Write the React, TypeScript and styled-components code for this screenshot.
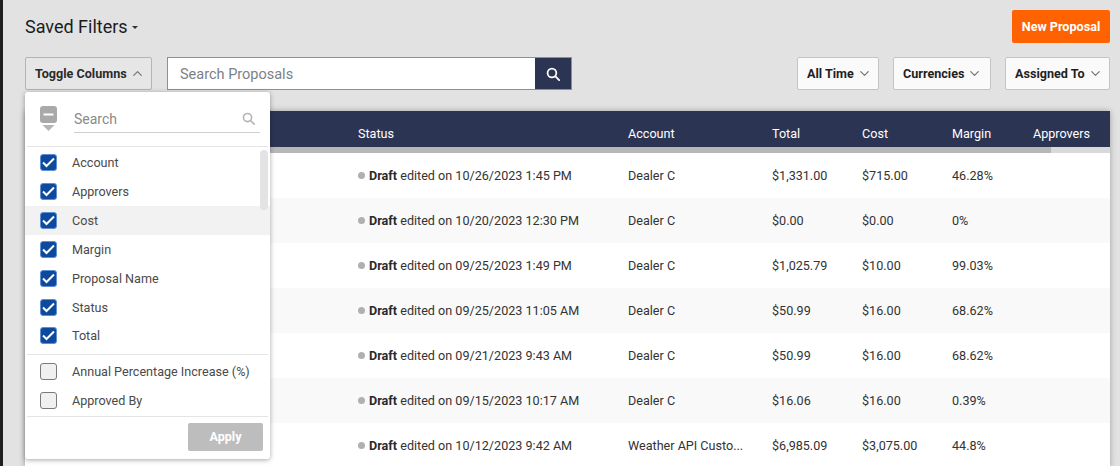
import React from 'react'
import styled, { createGlobalStyle } from 'styled-components'
import { ChevronDown, ChevronUp } from 'lucide-react'

const GlobalStyle = createGlobalStyle`
  html, body {
    margin: 0;
    padding: 0;
    height: 466px;
    overflow: hidden;
    background: #e2e2e2;
    font-family: Roboto, "Liberation Sans", sans-serif;
  }
`

const Page = styled.div`
  width: 1120px;
  height: 466px;
  box-sizing: border-box;
  overflow: hidden;
  border-left: 3px solid #1f1f1f;
  padding: 10px 10px 0 22px;
`

const TopBar = styled.div`
  display: flex;
  justify-content: space-between;
  align-items: center;
  height: 33px;
`

const SavedFilters = styled.div`
  display: flex;
  align-items: center;
  gap: 4px;
  font-size: 18px;
  color: #1c1c1c;
  margin-top: -1px;
`

const Caret = styled.span`
  width: 0;
  height: 0;
  margin-top: 2px;
  border-left: 3px solid transparent;
  border-right: 3px solid transparent;
  border-top: 3px solid #333;
`

const NewProposal = styled.button`
  width: 98px;
  height: 33px;
  border: 0;
  border-radius: 2px;
  padding: 0;
  background: #ff6200;
  color: #fff;
  font: 700 12.6px Roboto, sans-serif;
`

const Toolbar = styled.div`
  position: relative;
  display: flex;
  align-items: center;
  height: 33px;
  margin-top: 14px;
`

const ToggleButton = styled.button`
  display: flex;
  align-items: center;
  gap: 3px;
  width: 127px;
  height: 33px;
  box-sizing: border-box;
  border: 1px solid #b4b4b4;
  border-radius: 2px;
  padding: 0 0 0 9px;
  background: #e6e6e6;
  color: #2a2a2a;
  font: 700 12.6px Roboto, sans-serif;
`

const SearchBox = styled.div`
  display: flex;
  width: 405px;
  height: 33px;
  box-sizing: border-box;
  margin-left: 15px;
  border: 1px solid #8f8f8f;
  background: #fff;
`

const SearchInput = styled.div`
  flex: 1;
  padding: 1px 0 0 12px;
  font-size: 14.5px;
  line-height: 31px;
  color: #7b8189;
`

const SearchButton = styled.div`
  display: flex;
  align-items: center;
  justify-content: center;
  width: 36px;
  background: #2c3454;
`

const Filters = styled.div`
  display: flex;
  gap: 14px;
  margin-left: auto;
`

const FilterButton = styled.button<{ $width: number }>`
  display: flex;
  align-items: center;
  gap: 3px;
  width: ${(p) => p.$width}px;
  height: 33px;
  box-sizing: border-box;
  border: 1px solid #c4c4c4;
  border-radius: 2px;
  padding: 0 0 0 9px;
  background: #fafafa;
  color: #1f1f1f;
  font: 700 12.6px Roboto, sans-serif;
`

const Table = styled.div`
  margin-top: 21px;
  background: #fff;
  box-shadow: 0 0 6px rgba(0, 0, 0, 0.3);
`

const Columns = styled.div`
  display: grid;
  grid-template-columns: 333px 270px 144px 90px 90px 81px 77px;
  align-items: center;
`

const HeadRow = styled(Columns)`
  height: 36px;
  box-sizing: border-box;
  padding-top: 9px;
  background: #2c3454;
  color: #fff;
  font-size: 12.6px;
`

const ScrollTrack = styled.div`
  height: 6px;
  background: #d9d9d9;
`

const ScrollThumb = styled.div`
  width: 1026px;
  height: 6px;
  background: #b7b7b7;
`

const Row = styled(Columns)<{ $alt: boolean }>`
  height: 45px;
  background: ${(p) => (p.$alt ? '#f9f9f9' : '#fff')};
  color: #333;
  font-size: 12.6px;
`

const StatusCell = styled.div`
  display: flex;
  align-items: center;
  white-space: pre;
`

const Dot = styled.span`
  width: 7px;
  height: 7px;
  margin-right: 4px;
  border-radius: 50%;
  background: #b0b0b0;
`

const Bold = styled.b`
  font-weight: 700;
  color: #2a2a2a;
`

const Popover = styled.div`
  position: absolute;
  top: 35px;
  left: 0;
  z-index: 5;
  width: 245px;
  height: 367px;
  border-radius: 3px;
  background: #fff;
  box-shadow: 0 1px 5px rgba(0, 0, 0, 0.35);
`

const PopHead = styled.div`
  display: flex;
  align-items: flex-start;
  height: 55px;
  margin: 0 2px;
  padding: 14px 0 0 13px;
  box-sizing: border-box;
  border-bottom: 1px solid #e4e4e4;
`

const PopSearch = styled.div`
  display: flex;
  justify-content: space-between;
  align-items: center;
  width: 186px;
  height: 27px;
  margin-left: 17px;
  padding: 0 5px 1px 0;
  box-sizing: border-box;
  border-bottom: 1px solid #cfcfcf;
  color: #8a8a8a;
  font-size: 14px;
`

const ListArea = styled.div`
  position: relative;
  padding-top: 1.5px;
`

const ScrollBar = styled.div`
  position: absolute;
  top: 3px;
  right: 2px;
  width: 8px;
  height: 60px;
  border-radius: 4px;
  background: #e3e3e3;
`

const Option = styled.div<{ $hover?: boolean }>`
  display: flex;
  align-items: center;
  gap: 15px;
  height: 28.85px;
  padding-left: 15px;
  background: ${(p) => (p.$hover ? '#f2f2f2' : 'transparent')};
  color: #4a4a4a;
  font-size: 12.6px;
`

const Check = styled.span<{ $on: boolean }>`
  display: flex;
  align-items: center;
  justify-content: center;
  flex: none;
  width: 17px;
  height: 17px;
  box-sizing: border-box;
  border-radius: 3px;
  border: 1px solid ${(p) => (p.$on ? '#5f8fd0' : '#7a7a7a')};
  background: ${(p) => (p.$on ? '#0d4a9e' : '#f0f0f0')};
`

const Divider = styled.div`
  height: 1px;
  margin: 3.5px 2px 2px;
  background: #e4e4e4;
`

const FooterDivider = styled(Divider)`
  margin: 1px 2px 0;
`

const Footer = styled.div`
  display: flex;
  justify-content: flex-end;
  padding: 6px 7px 0 0;
`

const ApplyButton = styled.button`
  width: 75px;
  height: 28px;
  border: 0;
  border-radius: 2px;
  padding: 0;
  background: #bdbdbd;
  color: #fff;
  font: 700 12.6px Roboto, sans-serif;
`

const rows = [
  ['10/26/2023 1:45 PM', 'Dealer C', '$1,331.00', '$715.00', '46.28%'],
  ['10/20/2023 12:30 PM', 'Dealer C', '$0.00', '$0.00', '0%'],
  ['09/25/2023 1:49 PM', 'Dealer C', '$1,025.79', '$10.00', '99.03%'],
  ['09/25/2023 11:05 AM', 'Dealer C', '$50.99', '$16.00', '68.62%'],
  ['09/21/2023 9:43 AM', 'Dealer C', '$50.99', '$16.00', '68.62%'],
  ['09/15/2023 10:17 AM', 'Dealer C', '$16.06', '$16.00', '0.39%'],
  ['10/12/2023 9:42 AM', 'Weather API Custo...', '$6,985.09', '$3,075.00', '44.8%'],
]

const checked = ['Account', 'Approvers', 'Cost', 'Margin', 'Proposal Name', 'Status', 'Total']
const unchecked = ['Annual Percentage Increase (%)', 'Approved By']

const SearchGlyph = ({ color, size }: { color: string; size: number }) => (
  <svg width={size} height={size} viewBox="0 0 16 16" fill="none" stroke={color} strokeWidth="2">
    <circle cx="6.8" cy="6.8" r="5" />
    <path d="M10.5 10.5 15 15" strokeLinecap="round" />
  </svg>
)

const MinusPin = () => (
  <svg width="17" height="25" viewBox="0 0 17 25">
    <rect width="17" height="17" rx="3" fill="#a9a9a9" />
    <rect x="3.5" y="7.5" width="10" height="2" fill="#fff" />
    <path d="M2.500 19h12l-6 6z" fill="#b5b5b5" />
  </svg>
)

const OptionRow = ({ label, on }: { label: string; on: boolean }) => (
  <Option $hover={label === 'Cost'}>
    <Check $on={on}>
      {on && (
        <svg width="13" height="11" viewBox="0 0 13 11" fill="none" stroke="#fff" strokeWidth="2">
          <path d="M1 5.500 4.500 9 12 1.500" />
        </svg>
      )}
    </Check>
    {label}
  </Option>
)

export default function App() {
  return (
    <Page>
      <GlobalStyle />
      <TopBar>
        <SavedFilters>
          Saved Filters
          <Caret />
        </SavedFilters>
        <NewProposal>New Proposal</NewProposal>
      </TopBar>
      <Toolbar>
        <ToggleButton>
          Toggle Columns
          <ChevronUp size={15} color="#777" />
        </ToggleButton>
        <SearchBox>
          <SearchInput>Search Proposals</SearchInput>
          <SearchButton>
            <SearchGlyph color="#fff" size={14} />
          </SearchButton>
        </SearchBox>
        <Filters>
          <FilterButton $width={82}>
            All Time
            <ChevronDown size={15} color="#777" />
          </FilterButton>
          <FilterButton $width={98}>
            Currencies
            <ChevronDown size={15} color="#777" />
          </FilterButton>
          <FilterButton $width={105}>
            Assigned To
            <ChevronDown size={15} color="#777" />
          </FilterButton>
        </Filters>
        <Popover>
          <PopHead>
            <MinusPin />
            <PopSearch>
              Search
              <SearchGlyph color="#b5b5b5" size={13} />
            </PopSearch>
          </PopHead>
          <ListArea>
            <ScrollBar />
            {checked.map((label) => (
              <OptionRow key={label} label={label} on />
            ))}
            <Divider />
            {unchecked.map((label) => (
              <OptionRow key={label} label={label} on={false} />
            ))}
          </ListArea>
          <FooterDivider />
          <Footer>
            <ApplyButton>Apply</ApplyButton>
          </Footer>
        </Popover>
      </Toolbar>
      <Table>
        <HeadRow>
          <span />
          <span>Status</span>
          <span>Account</span>
          <span>Total</span>
          <span>Cost</span>
          <span>Margin</span>
          <span>Approvers</span>
        </HeadRow>
        <ScrollTrack>
          <ScrollThumb />
        </ScrollTrack>
        {rows.map((row, i) => (
          <Row key={row[0]} $alt={i % 2 === 1}>
            <span />
            <StatusCell>
              <Dot />
              <Bold>Draft</Bold>
              {` edited on ${row[0]}`}
            </StatusCell>
            <span>{row[1]}</span>
            <span>{row[2]}</span>
            <span>{row[3]}</span>
            <span>{row[4]}</span>
            <span />
          </Row>
        ))}
      </Table>
    </Page>
  )
}
